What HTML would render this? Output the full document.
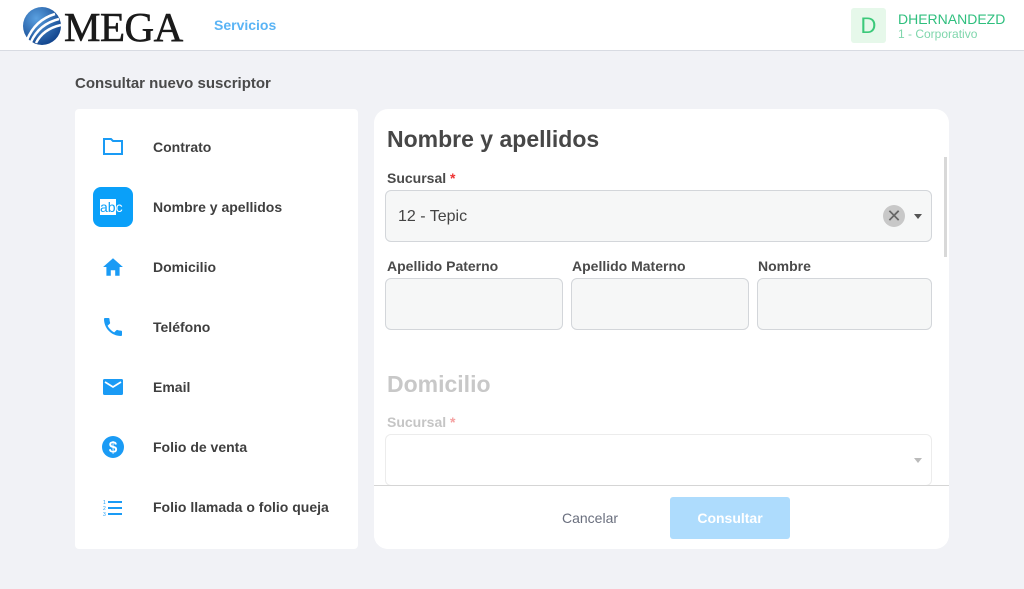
<!DOCTYPE html>
<html><head><meta charset="utf-8"><style>
*{box-sizing:border-box;margin:0;padding:0}
body{width:1024px;height:589px;background:#f1f2f6;font-family:"Liberation Sans",Arial,sans-serif;position:relative;overflow:hidden;color:#444}
.hdr{position:absolute;left:0;top:0;width:1024px;height:51px;background:#fff;border-bottom:1px solid #d8dbe2}
.abs{position:absolute}
.lbl{font-size:14px;font-weight:bold;color:#4a4a4a}
.inp{position:absolute;background:#f6f7f7;border:1px solid #d3d6da;border-radius:6px}
.side div.it{position:absolute;left:153px;font-size:14px;font-weight:bold;color:#3f3f3f}
</style></head><body>
<div class="hdr">
  <svg class="abs" style="left:21px;top:6px" width="42" height="40" viewBox="0 0 42 40">
    <defs><radialGradient id="g" cx="0.35" cy="0.3" r="0.8"><stop offset="0" stop-color="#5aa0e0"/><stop offset="1" stop-color="#0c3d86"/></radialGradient></defs>
    <circle cx="21" cy="20" r="19" fill="url(#g)"/>
    <path d="M6 34 Q14 14 34 8" stroke="#fff" stroke-width="2.5" fill="none"/>
    <path d="M10 36 Q18 18 38 13" stroke="#fff" stroke-width="2.5" fill="none"/>
    <path d="M15 37 Q22 23 40 19" stroke="#fff" stroke-width="2.5" fill="none"/>
  </svg>
  <div class="abs" style="left:64px;top:3px;font-family:'Liberation Serif',serif;font-size:41px;color:#1a1a1a;letter-spacing:-0.5px;-webkit-text-stroke:0.6px #1a1a1a">MEGA</div>
  <div class="abs" style="left:214px;top:17px;font-size:14px;font-weight:bold;color:#5ab4f5">Servicios</div>
  <div class="abs" style="left:851px;top:8px;width:35px;height:35px;background:#e6f8ea;border-radius:3px;color:#3cc97a;font-size:22px;text-align:center;line-height:35px">D</div>
  <div class="abs" style="left:898px;top:11px;font-size:14px;color:#2fbf7e">DHERNANDEZD</div>
  <div class="abs" style="left:898px;top:27px;font-size:12px;color:#7fd6ac">1 - Corporativo</div>
</div>
<div class="abs" style="left:75px;top:75px;font-size:15px;font-weight:bold;color:#4a4a4a">Consultar nuevo suscriptor</div>
<div class="abs side" style="left:75px;top:109px;width:283px;height:440px;background:#fff;border-radius:4px"></div>
<div class="side">
  <svg class="abs" style="left:103px;top:138px" width="20" height="17" viewBox="0 0 20 17"><path d="M1 1h7l2 2h9v13H1z" fill="none" stroke="#1a9bf5" stroke-width="2"/></svg>
  <div class="abs" style="left:93px;top:187px;width:40px;height:40px;border-radius:8px;background:#0aa0f9"><div style="position:absolute;left:7px;top:12px;font-size:14px;color:#fff"><span style="background:#fff;color:#0aa0f9">ab</span>c</div></div>
  <svg class="abs" style="left:102px;top:257px" width="22" height="20" viewBox="0 0 20 18"><path d="M10 1L1 9h3v8h4v-5h4v5h4V9h3z" fill="#1a9bf5"/></svg>
  <svg class="abs" style="left:101px;top:315px" width="24" height="24" viewBox="0 0 24 24"><path d="M6.6 10.8c1.4 2.8 3.8 5.1 6.6 6.6l2.2-2.2c.3-.3.7-.4 1-.2 1.1.4 2.3.6 3.6.6.6 0 1 .4 1 1V20c0 .6-.4 1-1 1C10.6 21 3 13.4 3 4c0-.6.4-1 1-1h3.5c.6 0 1 .4 1 1 0 1.3.2 2.5.6 3.6.1.3 0 .7-.2 1z" fill="#1a9bf5"/></svg>
  <svg class="abs" style="left:103px;top:379px" width="20" height="16" viewBox="0 0 20 16"><rect width="20" height="16" rx="1.5" fill="#1a9bf5"/><path d="M2 3l8 5 8-5" stroke="#fff" stroke-width="1.8" fill="none"/></svg>
  <svg class="abs" style="left:102px;top:436px" width="22" height="22" viewBox="0 0 20 20"><circle cx="10" cy="10" r="10" fill="#1a9bf5"/><text x="10" y="15" text-anchor="middle" font-size="14" font-weight="bold" fill="#fff" font-family="Liberation Sans">$</text></svg>
  <svg class="abs" style="left:103px;top:499px" width="20" height="18" viewBox="0 0 20 18"><text x="0" y="5" font-size="5" fill="#1a9bf5">1</text><text x="0" y="11" font-size="5" fill="#1a9bf5">2</text><text x="0" y="17" font-size="5" fill="#1a9bf5">3</text><path d="M5 3h14M5 9h14M5 15h14" stroke="#1a9bf5" stroke-width="2"/></svg>
  <div class="it" style="top:139px">Contrato</div>
  <div class="it" style="top:199px">Nombre y apellidos</div>
  <div class="it" style="top:259px">Domicilio</div>
  <div class="it" style="top:319px">Teléfono</div>
  <div class="it" style="top:379px">Email</div>
  <div class="it" style="top:439px">Folio de venta</div>
  <div class="it" style="top:499px">Folio llamada o folio queja</div>
</div>
<div class="abs" style="left:374px;top:109px;width:575px;height:440px;background:#fff;border-radius:14px;overflow:hidden">
  <div class="abs" style="left:13px;top:17px;font-size:23px;font-weight:bold;color:#474747">Nombre y apellidos</div>
  <div class="abs" style="left:570px;top:48px;width:3px;height:100px;background:#d8d8d8"></div>
  <div class="abs lbl" style="left:13px;top:61px">Sucursal <span style="color:#e33">*</span></div>
  <div class="inp" style="left:11px;top:81px;width:547px;height:52px"></div>
  <div class="abs" style="left:24px;top:99px;font-size:16px;color:#444">12 - Tepic</div>
  <div class="abs" style="left:509px;top:96px;width:22px;height:22px;border-radius:50%;background:#c8c8c8;color:#666;font-size:18px;text-align:center;line-height:22px">✕</div>
  <div class="abs" style="left:540px;top:105px;width:0;height:0;border-left:4px solid transparent;border-right:4px solid transparent;border-top:5px solid #555"></div>
  <div class="abs lbl" style="left:13px;top:149px">Apellido Paterno</div>
  <div class="abs lbl" style="left:198px;top:149px">Apellido Materno</div>
  <div class="abs lbl" style="left:384px;top:149px">Nombre</div>
  <div class="inp" style="left:11px;top:169px;width:178px;height:52px"></div>
  <div class="inp" style="left:197px;top:169px;width:178px;height:52px"></div>
  <div class="inp" style="left:383px;top:169px;width:175px;height:52px"></div>
  <div class="abs" style="left:13px;top:262px;font-size:23px;font-weight:bold;color:#c8c8c8">Domicilio</div>
  <div class="abs" style="left:13px;top:305px;font-size:14px;font-weight:bold;color:#c5c5c5">Sucursal <span style="color:#f5a0a0">*</span></div>
  <div class="abs" style="left:11px;top:325px;width:547px;height:52px;border:1px solid #ececec;border-radius:6px"></div>
  <div class="abs" style="left:540px;top:349px;width:0;height:0;border-left:4px solid transparent;border-right:4px solid transparent;border-top:5px solid #bbb"></div>
  <div class="abs" style="left:0;top:376px;width:575px;height:64px;background:#fff;border-top:1px solid #d5d5d5"></div>
  <div class="abs" style="left:188px;top:401px;font-size:14px;color:#6a6f7e">Cancelar</div>
  <div class="abs" style="left:296px;top:388px;width:120px;height:42px;background:#aedcfd;border-radius:3px;color:#fff;font-size:14px;font-weight:bold;text-align:center;line-height:42px">Consultar</div>
</div>
</body></html>
